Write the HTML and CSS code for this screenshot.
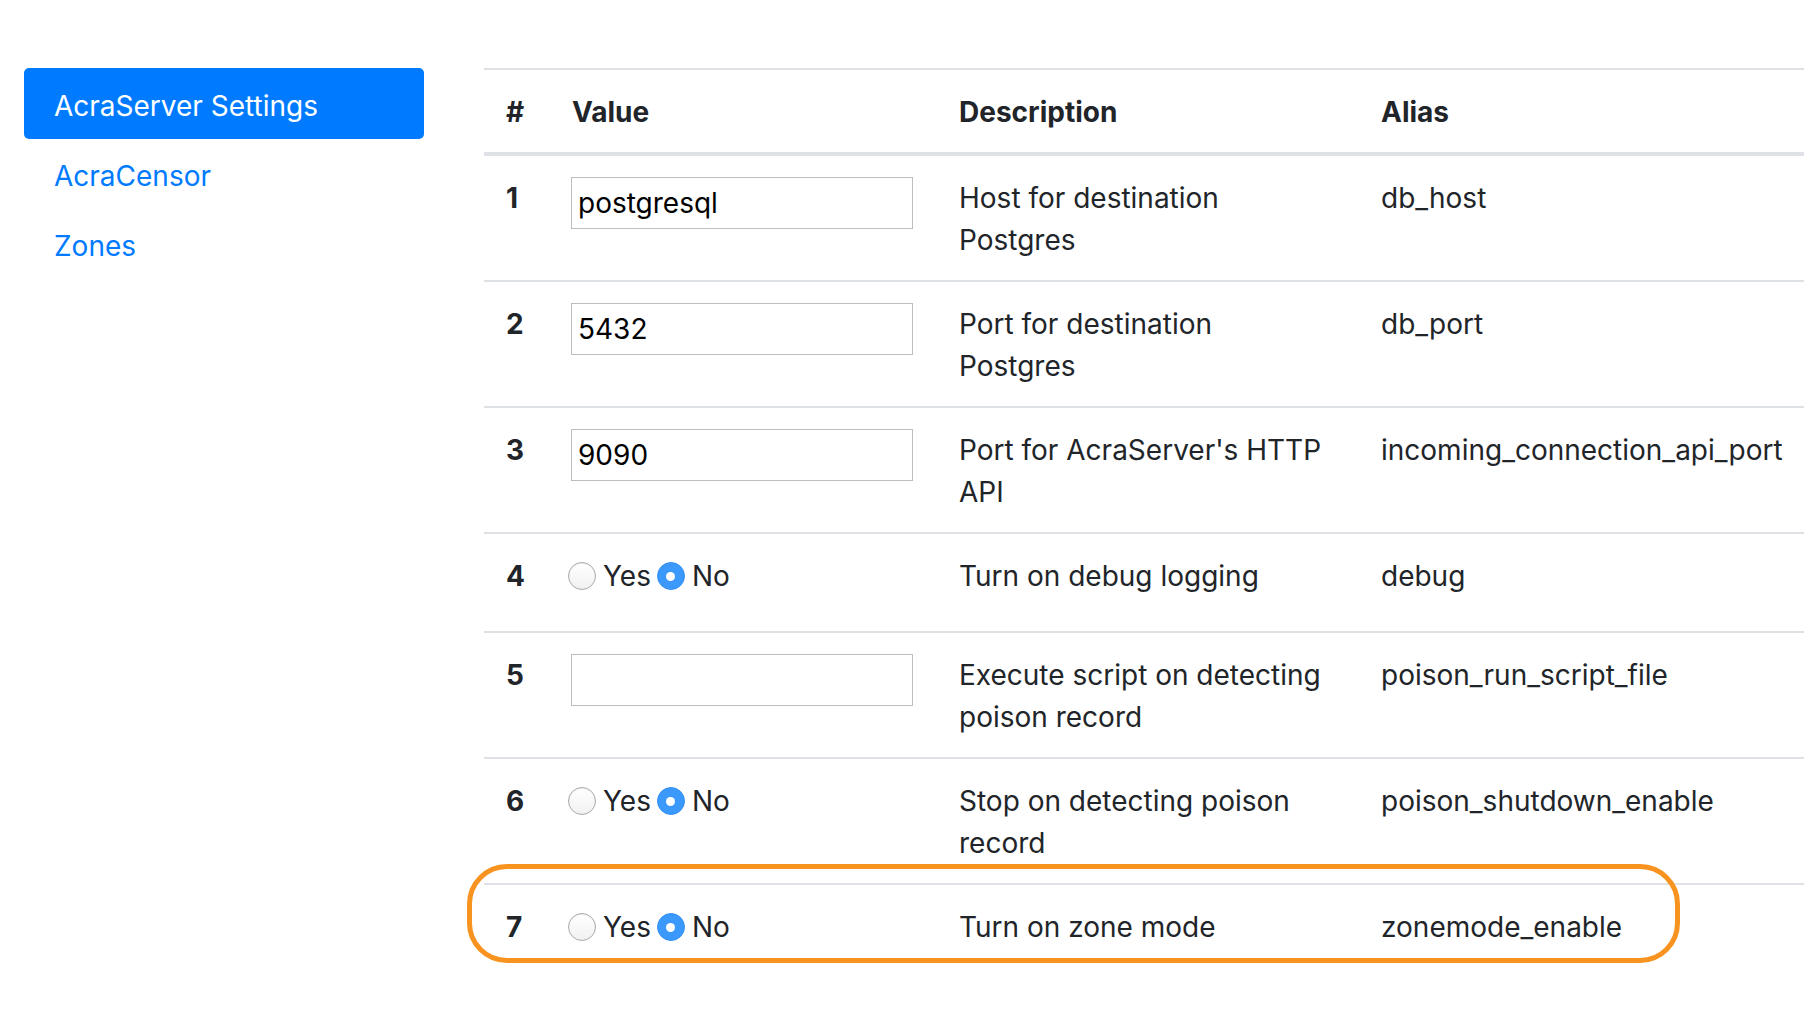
FILE: index.html
```html
<!DOCTYPE html>
<html lang="en">
<head>
<meta charset="utf-8">
<title>AcraServer Settings</title>
<link rel="stylesheet" href="styles.css">
</head>
<body>
<div class="page">
  <nav class="sidebar">
    <a class="nav-link active" href="#">AcraServer Settings</a>
    <a class="nav-link" href="#">AcraCensor</a>
    <a class="nav-link" href="#">Zones</a>
  </nav>
  <main class="main">
    <table class="settings">
      <colgroup>
        <col class="c-num"><col class="c-val"><col class="c-desc"><col class="c-alias">
      </colgroup>
      <thead>
        <tr><th>#</th><th>Value</th><th>Description</th><th>Alias</th></tr>
      </thead>
      <tbody>
        <tr>
          <th>1</th>
          <td><input class="text-input" type="text" value="postgresql"></td>
          <td>Host for destination Postgres</td>
          <td>db_host</td>
        </tr>
        <tr>
          <th>2</th>
          <td><input class="text-input" type="text" value="5432"></td>
          <td>Port for destination Postgres</td>
          <td>db_port</td>
        </tr>
        <tr>
          <th>3</th>
          <td><input class="text-input" type="text" value="9090"></td>
          <td>Port for AcraServer's HTTP API</td>
          <td>incoming_connection_api_port</td>
        </tr>
        <tr class="radio-row">
          <th>4</th>
          <td>
            <div class="radios">
              <label class="radio"><input type="radio" name="debug"><span>Yes</span></label>
              <label class="radio"><input type="radio" name="debug" checked><span>No</span></label>
            </div>
          </td>
          <td>Turn on debug logging</td>
          <td>debug</td>
        </tr>
        <tr>
          <th>5</th>
          <td><input class="text-input" type="text" value=""></td>
          <td>Execute script on detecting poison record</td>
          <td>poison_run_script_file</td>
        </tr>
        <tr>
          <th>6</th>
          <td>
            <div class="radios">
              <label class="radio"><input type="radio" name="shutdown"><span>Yes</span></label>
              <label class="radio"><input type="radio" name="shutdown" checked><span>No</span></label>
            </div>
          </td>
          <td>Stop on detecting poison record</td>
          <td>poison_shutdown_enable</td>
        </tr>
        <tr class="radio-row last">
          <th>7</th>
          <td>
            <div class="radios">
              <label class="radio"><input type="radio" name="zonemode"><span>Yes</span></label>
              <label class="radio"><input type="radio" name="zonemode" checked><span>No</span></label>
            </div>
          </td>
          <td>Turn on zone mode</td>
          <td>zonemode_enable</td>
        </tr>
      </tbody>
    </table>
    <div class="highlight"></div>
  </main>
</div>
</body>
</html>
```

FILE: styles.css
```css
* { box-sizing: border-box; }

html, body {
  margin: 0;
  padding: 0;
  background: #fff;
}

body {
  font-family: Inter, "Noto Sans", "Liberation Sans", sans-serif;
  font-size: 28px;
  line-height: 42px;
  color: #212529;
}

.page {
  display: flex;
  align-items: flex-start;
  min-height: 100vh;
  padding: 68px 0 0 24px;
  gap: 60px;
}

.sidebar {
  width: 400px;
  flex: none;
  display: flex;
  flex-direction: column;
}

.nav-link {
  display: block;
  height: 71px;
  padding: 17px 30px 12px;
  color: #007bff;
  text-decoration: none;
  border-radius: 5px;
}

.nav-link + .nav-link:not(.active) {
  height: 70px;
  padding-top: 16px;
}

.nav-link.active {
  background: #007bff;
  color: #fff;
}

.main {
  position: relative;
  width: 1320px;
  flex: none;
}

.settings {
  width: 1320px;
  border-collapse: collapse;
  table-layout: fixed;
}

.c-num { width: 66px; }
.c-val { width: 387px; }
.c-desc { width: 422px; }
.c-alias { width: 445px; }

.settings th,
.settings td {
  padding: 21px 22px 19px 22px;
  text-align: left;
  vertical-align: top;
  border-top: 2px solid #dee2e6;
}

.settings th { font-weight: 700; }

.settings thead th {
  border-bottom: 4px solid #dee2e6;
}

.settings tbody tr:first-child th,
.settings tbody tr:first-child td {
  border-top: none;
}

.settings td:nth-child(2) { padding-left: 21px; }
.settings td:nth-child(3) { padding-right: 34px; }

.text-input {
  display: block;
  width: 342px;
  height: 52px;
  margin: 0;
  padding: 0 6px;
  border: 1px solid #bdbdbd;
  border-radius: 0;
  font: inherit;
  font-size: 28px;
  color: #000;
  background: #fff;
  outline: none;
}

.radio-row th,
.radio-row td {
  padding-bottom: 34px;
}

.radios {
  display: flex;
  align-items: center;
  height: 42px;
  margin-left: -3px;
}

.radio {
  display: flex;
  align-items: center;
  margin-right: 6px;
}

.radio input {
  -webkit-appearance: none;
  appearance: none;
  width: 28px;
  height: 28px;
  margin: 0 7px 0 0;
  border-radius: 50%;
  border: 1px solid #a9a9a9;
  background: linear-gradient(#ffffff, #f1f1f1);
  box-shadow: inset 0 1px 1px rgba(0,0,0,0.06);
  position: relative;
  flex: none;
}

.radio input:checked {
  background: #3b99fc;
  border-color: #3590f3;
  box-shadow: none;
}

.radio input:checked::after {
  content: "";
  position: absolute;
  left: 50%;
  top: 50%;
  width: 9px;
  height: 9px;
  margin: -4.5px 0 0 -4.5px;
  border-radius: 50%;
  background: #fff;
}

.highlight {
  position: absolute;
  left: -17px;
  top: 796px;
  width: 1213px;
  height: 99px;
  border: 5px solid #f7931e;
  border-radius: 40px;
  pointer-events: none;
}
```
